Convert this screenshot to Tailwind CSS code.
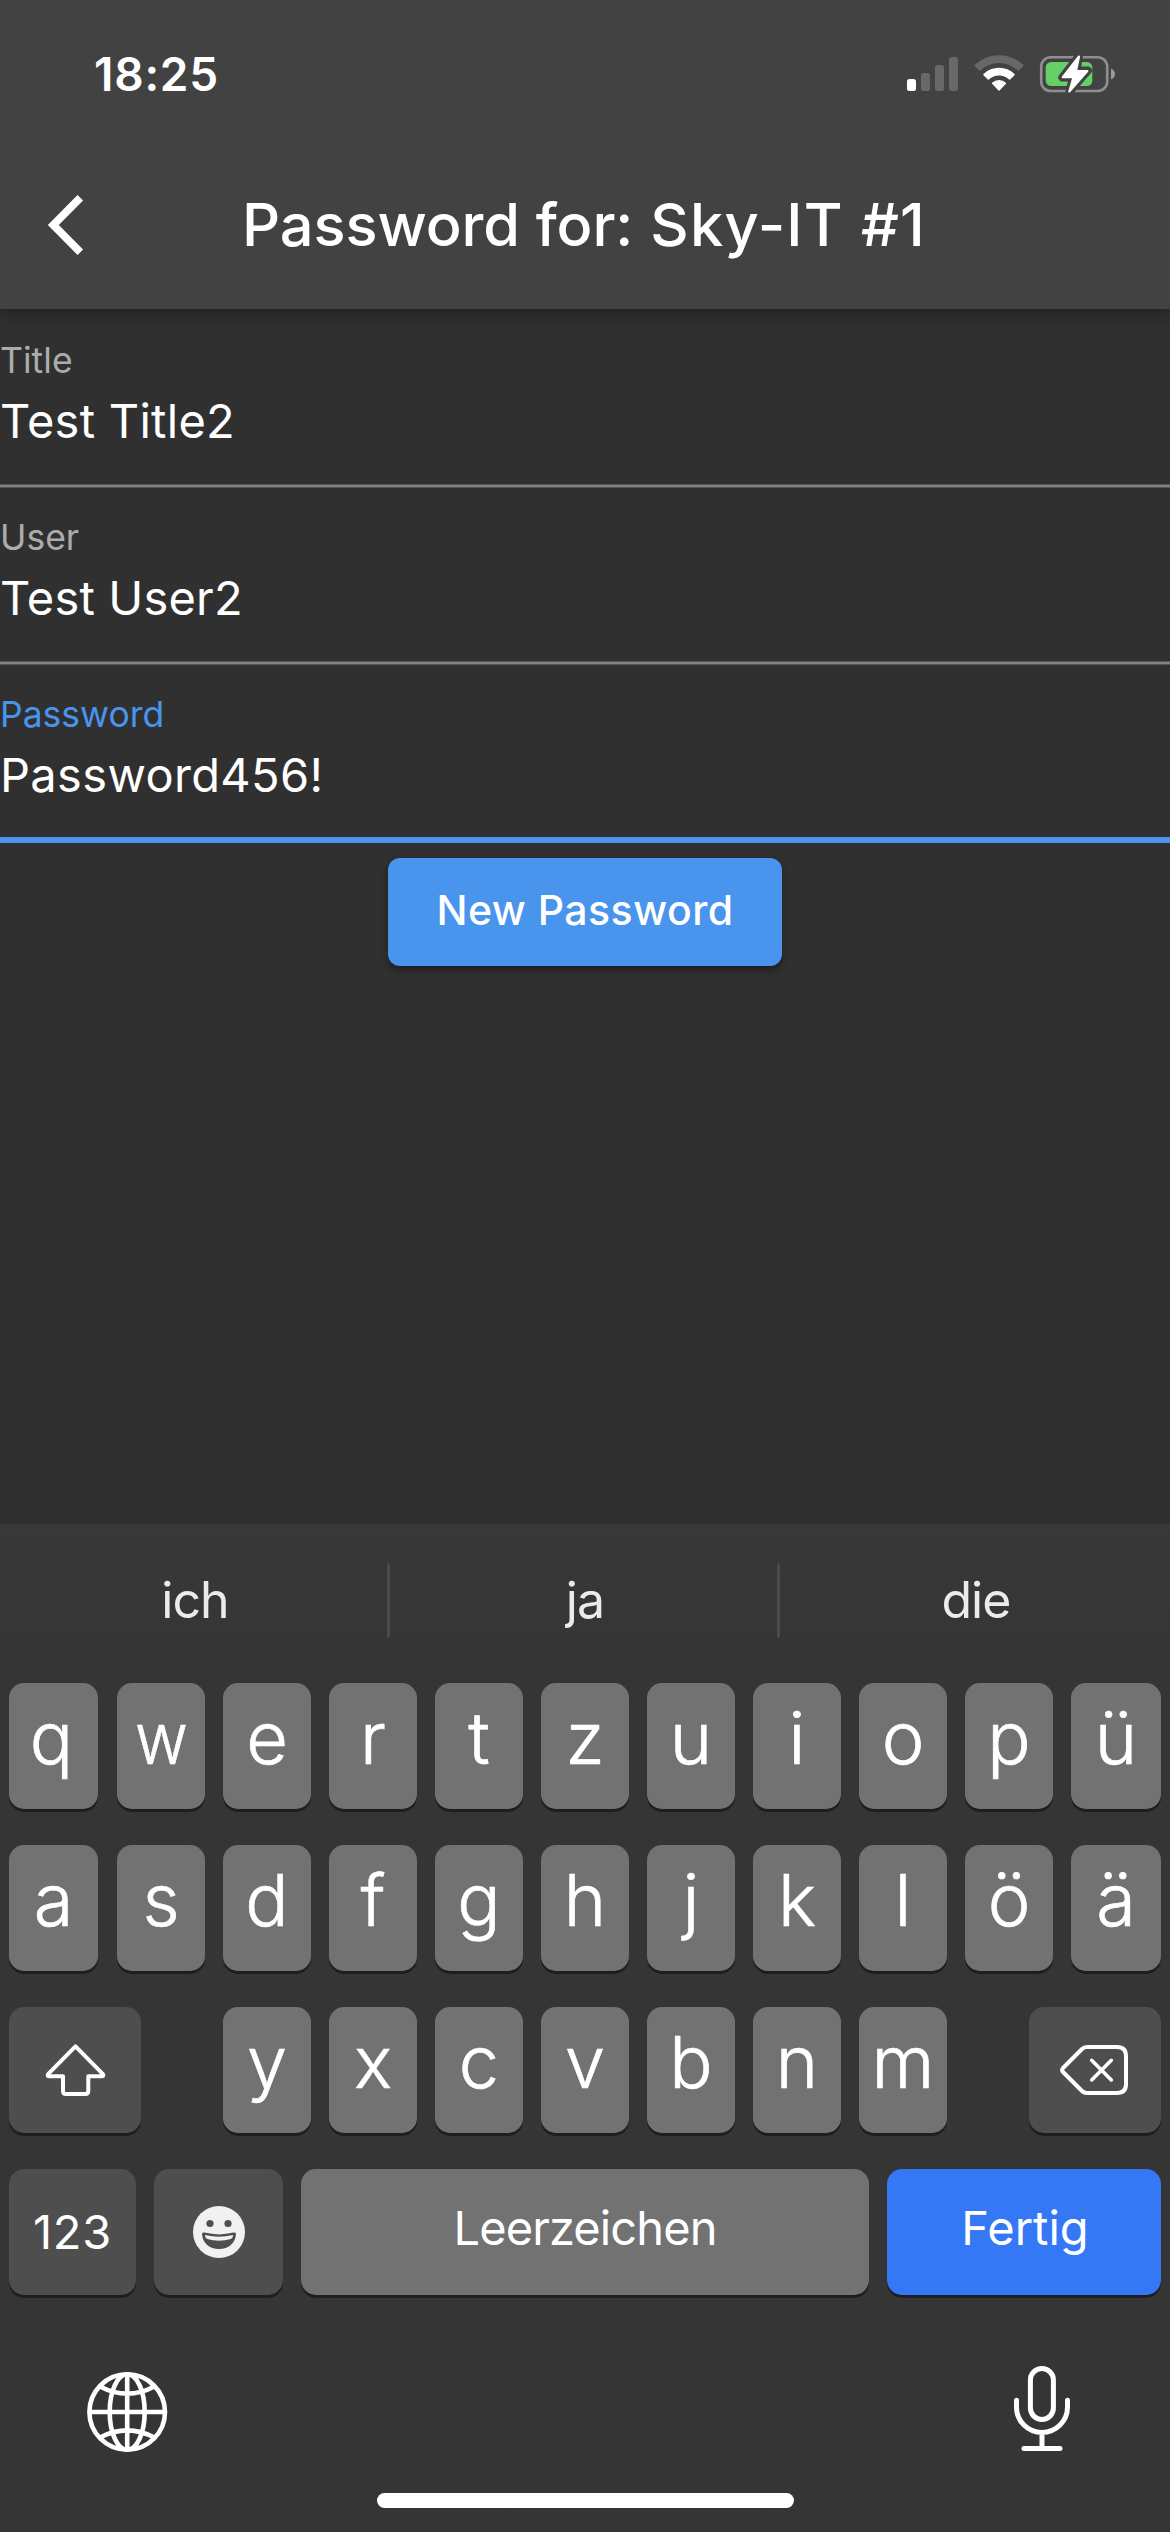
<!DOCTYPE html>
<html lang="de">
<head>
<meta charset="utf-8">
<title>Password for: Sky-IT #1</title>
<script src="https://cdn.jsdelivr.net/npm/@tailwindcss/browser@4"></script>
</head>
<body class="bg-[#303030]">
<div class="flex h-[2532px] w-[1170px] flex-col overflow-hidden bg-[#303030] font-['Inter',sans-serif] text-white">

  <!-- App bar with status line -->
  <header class="relative h-[309px] shrink-0 bg-[#424242] shadow-[0_6px_12px_-3px_rgba(0,0,0,0.2),0_8px_16px_-2px_rgba(0,0,0,0.16)]">
    <div class="flex h-[141px] items-start justify-between pt-[44px] pr-[50px] pl-[94px]">
      <span class="text-[46px] leading-[61px] font-semibold tracking-[0.74px]">18:25</span>
      <svg class="mt-[6px] h-[50px] w-[220px]" viewBox="900 50 220 50">
        <rect x="907" y="79" width="9" height="12" rx="2.5" fill="#fff"/>
        <g fill="#686868">
          <rect x="921" y="73" width="9" height="18" rx="2.5"/>
          <rect x="935" y="65" width="9" height="26" rx="2.5"/>
          <rect x="949" y="57" width="9" height="34" rx="2.5"/>
        </g>
        <path d="M975.2 65.6A34 34 0 0 1 1022.8 65.6L1018.4 70A28 28 0 0 0 979.6 70Z" fill="#686868" stroke="#686868" stroke-width="1.5" stroke-linejoin="round"/>
        <path d="M984 74.6A21.500 21.500 0 0 1 1014 74.600L1009.600 79A15.300 15.300 0 0 0 988.400 79Z" fill="#fff" stroke="#fff" stroke-width="1.500" stroke-linejoin="round"/>
        <path d="M992.600 83.300A9 9 0 0 1 1005.400 83.300L999 90Z" fill="#fff" stroke="#fff" stroke-width="1.500" stroke-linejoin="round"/>
        <rect x="1041.200" y="57.200" width="66" height="33.800" rx="9.500" fill="none" stroke="#8f8f8f" stroke-width="2.600"/>
        <path d="M1111 68.500Q1115 70.500 1115 74T1111 79.500Z" fill="#9a9a9a"/>
        <rect x="1045.700" y="62" width="46.600" height="24" rx="5.500" fill="#65cf68"/>
        <path d="M1079 56L1062.300 77.500H1073L1069.500 92L1088 70.500H1076.500Z" fill="#424242" stroke="#424242" stroke-width="8" stroke-linejoin="round"/>
        <path d="M1079 56.500L1062.800 77.200H1073.500L1069.300 91.500L1087.300 71H1076Z" fill="#fff" stroke="#fff" stroke-width="2.200" stroke-linejoin="round"/>
      </svg>
    </div>
    <div class="flex h-[168px] items-center pl-[30px]">
      <svg class="size-[72px]" viewBox="0 0 24 24" fill="#fff"><path d="M17.700 3.870L15.850 2 5.950 12l9.900 10 1.850-1.870L9.600 12z"/></svg>
      <h1 class="mb-[2px] ml-[140px] text-[59.5px] leading-[72px] font-medium tracking-[0.43px] whitespace-nowrap"><span class="tracking-[-0.1px]">Password for:</span><span class="tracking-[1.2px]"> Sky-IT #1</span></h1>
    </div>
  </header>

  <main class="flex flex-1 flex-col">
    <label class="flex flex-col pt-[32px]">
      <span class="h-[40px] text-[35.5px] leading-[40px] tracking-[0.05px] text-[#acacac]">Title</span>
      <span class="mt-[12px] mb-[35px] h-[56px] text-[47px] leading-[56px] tracking-[0.27px]">Test Title2</span>
      <span class="h-[4px] border-y border-[#555] bg-[#838383]"></span>
    </label>
    <label class="flex flex-col pt-[30px]">
      <span class="h-[40px] text-[35.5px] leading-[40px] text-[#acacac]">User</span>
      <span class="mt-[12px] mb-[35px] h-[56px] text-[47px] leading-[56px] tracking-[0.17px]">Test User2</span>
      <span class="h-[4px] border-y border-[#555] bg-[#838383]"></span>
    </label>
    <label class="flex flex-col pt-[30px]">
      <span class="h-[40px] text-[35.5px] leading-[40px] text-[#4994ec]">Password</span>
      <span class="mt-[12px] mb-[34px] h-[56px] text-[47px] leading-[56px] tracking-[0.35px]">Password456!</span>
      <span class="h-[6px] bg-[#4994ec]"></span>
    </label>
    <button class="mt-[15px] flex h-[108px] w-[394px] items-center justify-center self-center rounded-[12px] bg-[#4994ec] pb-[2px] text-[41px] font-medium tracking-[0.48px] shadow-[0_5px_6px_-1px_rgba(0,0,0,0.3),0_2px_9px_rgba(0,0,0,0.15)]">New Password</button>
  </main>

  <!-- On-screen keyboard -->
  <section class="flex h-[1008px] shrink-0 flex-col bg-linear-to-b from-[#383838] to-[#353535] to-15% pt-[39px]">
    <div class="grid h-[75px] grid-cols-[387px_3px_387px_3px_390px] text-center text-[50px] leading-[75px] tracking-[-0.9px] text-[#ebebeb]">
      <span class="pl-[3px]">ich</span><i class="rounded-full bg-[#4b4b4b]"></i><span class="pl-[3px]">ja</span><i class="rounded-full bg-[#4b4b4b]"></i><span class="pl-[2px]">die</span>
    </div>

    <div class="mt-[45px] flex flex-col gap-[36px] px-[9px] text-[72px] font-light [&_b]:flex [&_b]:h-[126px] [&_b]:items-center [&_b]:justify-center [&_b]:rounded-[15px] [&_b]:font-light [&_b]:shadow-[0_3px_0_#1e1e1e]">
      <div class="grid grid-cols-[90px_repeat(9,88px)_90px] gap-[18px] [-webkit-text-stroke:0.7px_white] [&_b]:bg-[#727272] [&_b]:pb-[16px]">
        <b class="mr-px pr-[4px]">q</b><b><span class="inline-block scale-x-90">w</span></b><b>e</b><b>r</b><b>t</b><b>z</b><b>u</b><b>i</b><b>o</b><b>p</b><b>ü</b>
      </div>
      <div class="grid grid-cols-[90px_repeat(9,88px)_90px] gap-[18px] [-webkit-text-stroke:0.7px_white] [&_b]:bg-[#727272] [&_b]:pb-[16px]">
        <b class="mr-px">a</b><b>s</b><b>d</b><b>f</b><b>g</b><b>h</b><b>j</b><b>k</b><b>l</b><b>ö</b><b>ä</b>
      </div>
      <div class="flex justify-between">
        <b class="w-[132px] bg-[#4e4e4e]">
          <svg class="h-[126px] w-[132px]" viewBox="9 7 132 126" fill="none" stroke="#fff" stroke-width="4" stroke-linejoin="round"><path d="M75.500 46.300L48.300 73.800Q46.800 76.200 49 76.200H63V91Q63 94 66 94H85.300Q88.300 94 88.300 91V76.200H102Q104.200 76.200 102.700 73.800Z"/></svg>
        </b>
        <div class="grid grid-cols-[repeat(7,88px)] gap-[18px] [-webkit-text-stroke:0.7px_white] [&_b]:bg-[#727272] [&_b]:pb-[16px]">
          <b>y</b><b>x</b><b>c</b><b>v</b><b>b</b><b>n</b><b>m</b>
        </div>
        <b class="w-[132px] bg-[#4e4e4e]">
          <svg class="h-[126px] w-[132px]" viewBox="1029 2007 132 126" fill="none" stroke="#fff" stroke-width="4" stroke-linecap="round" stroke-linejoin="round"><path d="M1087 2047H1117Q1126 2047 1126 2056V2084Q1126 2093 1117 2093H1087Q1084 2093 1082 2091L1063 2072Q1061.300 2070 1063 2068L1082 2049Q1084 2047 1087 2047Z"/><path stroke-width="3.600" d="M1091.700 2060.300L1111.300 2079.900M1111.300 2060.300L1091.700 2079.900"/></svg>
        </b>
      </div>
      <div class="flex gap-[18px] text-[47px]">
        <b class="w-[127px] bg-[#4e4e4e] tracking-[0.66px]"><span class="font-normal">123</span></b>
        <b class="w-[129px] bg-[#4e4e4e]">
          <svg class="size-[52px]" viewBox="0 0 52 52"><circle cx="26" cy="26" r="26" fill="#f1f1f1"/><g fill="#4e4e4e"><circle cx="17" cy="17.500" r="3.600"/><circle cx="35" cy="17.500" r="3.600"/><path d="M9 28Q9 26 11.500 26.600Q26 30.200 40.500 26.600Q43 26 43 28C42.500 37 35.500 43 26 43S9.500 37 9 28Z"/></g><path fill="#f1f1f1" d="M12 29Q26 32.500 40 29Q40.500 31.500 38 33Q26 36.600 14 33Q11.500 31.500 12 29Z"/></svg>
        </b>
        <b class="w-[568px] bg-[#727272] pb-[8px] tracking-[-0.9px]"><span class="font-normal">Leerzeichen</span></b>
        <b class="w-[274px] bg-[#3478f6] pb-[8px] pl-[2px]"><span class="font-normal">Fertig</span></b>
      </div>
    </div>

    <div class="mt-[68px] flex h-[94px] items-start justify-between pr-[98px] pl-[85px]">
      <svg class="mt-[5px] h-[88px] w-[84px]" viewBox="85 2368 84 88" fill="none" stroke="#fff" stroke-width="4.600"><circle cx="127.200" cy="2412" r="37.800"/><ellipse cx="127.200" cy="2412" rx="17.500" ry="37.800"/><path d="M127.200 2374V2450M89 2412H165.500M100 2386.500Q127.200 2400.800 154.400 2386.500M100 2437.500Q127.200 2423.200 154.400 2437.500"/></svg>
      <svg class="h-[92px] w-[60px]" viewBox="1012 2363 60 92" fill="none" stroke="#fff" stroke-width="5" stroke-linecap="round"><rect x="1030.400" y="2368.500" width="23" height="51" rx="11.500"/><path d="M1016.500 2400.300V2407A25.500 25.500 0 0 0 1067.500 2407V2400.300M1042 2433V2448M1024 2448.400H1060"/></svg>
    </div>
    <div class="mt-[36px] h-[15px] w-[417px] self-center rounded-full bg-white"></div>
  </section>
</div>
</body>
</html>
